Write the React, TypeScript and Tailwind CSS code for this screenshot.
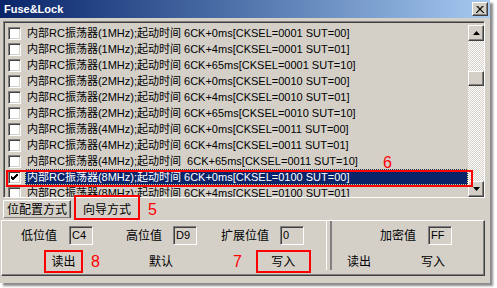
import React from 'react';

const rows: [string, string, string, string][] = [
  ['1MHz', '6CK+0ms', '0001', '00'],
  ['1MHz', '6CK+4ms', '0001', '01'],
  ['1MHz', '6CK+65ms', '0001', '10'],
  ['2MHz', '6CK+0ms', '0010', '00'],
  ['2MHz', '6CK+4ms', '0010', '01'],
  ['2MHz', '6CK+65ms', '0010', '10'],
  ['4MHz', '6CK+0ms', '0011', '00'],
  ['4MHz', '6CK+4ms', '0011', '01'],
  ['4MHz', ' 6CK+65ms', '0011', '10'],
  ['8MHz', '6CK+0ms', '0100', '00'],
  ['8MHz', '6CK+4ms', '0100', '01'],
];

// classic 3d borders
const raised =
  'border border-t-white border-l-white border-b-[#404040] border-r-[#404040] shadow-[inset_-1px_-1px_0_#808080]';
const sunken =
  'border border-t-[#808080] border-l-[#808080] border-b-white border-r-white shadow-[inset_1px_1px_0_#404040,inset_-1px_-1px_0_#d4d0c8]';

function CheckBox({ checked }: { checked?: boolean }) {
  return (
    <div className={`w-[13px] h-[13px] bg-white shrink-0 flex items-center justify-center ${sunken}`}>
      {checked && (
        <svg width="7" height="7" viewBox="0 0 7 7">
          <path d="M0 2 L2 4 L7 -1 M0 3 L2 5 L7 0 M0 4 L2 6 L7 1" stroke="#000" strokeWidth="1" fill="none" />
        </svg>
      )}
    </div>
  );
}

function Arrow({ up }: { up?: boolean }) {
  return (
    <div className={`w-[16px] h-[16px] bg-[#d4d0c8] flex items-center justify-center ${raised}`}>
      <svg width="7" height="4" viewBox="0 0 7 4">
        {up ? <path d="M3.5 0 L7 4 L0 4 Z" fill="#000" /> : <path d="M0 0 L7 0 L3.5 4 Z" fill="#000" />}
      </svg>
    </div>
  );
}

function Field({ value }: { value: string }) {
  return (
    <div className={`w-[24px] h-[19px] bg-[#d4d0c8] text-[11px] leading-[17px] pl-[2px] shrink-0 ${sunken}`}>
      {value}
    </div>
  );
}

function Num({ n, className = '' }: { n: string; className?: string }) {
  return <span className={`text-[16px] leading-none text-[#ff0000] ${className}`}>{n}</span>;
}

export default function App() {
  return (
    <div className="w-[497px] h-[288px] bg-white font-['Liberation_Sans','Noto_Sans_CJK_SC',sans-serif] text-black">
      <div className="relative w-[490px] h-[283px] bg-[#d4d0c8] flex flex-col shadow-[3px_3px_2px_rgba(0,0,0,0.45)]">
        {/* title bar */}
        <div className="h-[18px] bg-gradient-to-r from-[#0a246a] to-[#a6caf0] flex items-center justify-between pl-[4px] pr-[2px]">
          <span className="text-white font-bold text-[11px]">Fuse&amp;Lock</span>
          <div className={`w-[16px] h-[14px] bg-[#d4d0c8] flex items-center justify-center ${raised}`}>
            <svg width="8" height="7" viewBox="0 0 8 7">
              <path d="M0.5 0 L7.5 7 M7.5 0 L0.5 7 M1.5 0 L8 7 M6.5 0 L0 7" stroke="#000" strokeWidth="1" />
            </svg>
          </div>
        </div>

        {/* list */}
        <div className={`mt-[3px] ml-[3px] w-[482px] h-[177px] bg-[#d4d0c8] pt-[3px] pl-[1px] flex ${sunken}`}>
          <div className="flex-1 overflow-hidden">
            {rows.map(([f, t, c, s], i) => {
              const sel = i === 9;
              return (
                <div key={i} className="h-[16px] flex items-center">
                  <div className="ml-[3px]">
                    <CheckBox checked={sel} />
                  </div>
                  <div
                    className={`ml-[4px] flex-1 h-[16px] pl-[2px] flex items-center whitespace-pre text-[11px] ${
                      sel ? 'bg-[#0a246a] text-white outline outline-1 outline-dotted outline-[#d8d890] -outline-offset-1' : ''
                    }`}
                  >
                    {`内部RC振荡器(${f});起动时间 ${t}[CKSEL=${c} SUT=${s}]`}
                  </div>
                </div>
              );
            })}
          </div>
          <div className="w-[16px] flex flex-col">
            <Arrow up />
            <div className="flex-1 bg-[repeating-conic-gradient(#ffffff_0%_25%,#d4d0c8_0%_50%)] bg-[length:2px_2px] pt-[30px]">
              <div className={`w-[16px] h-[15px] bg-[#d4d0c8] ${raised}`} />
            </div>
            <Arrow />
          </div>
        </div>

        {/* tabs */}
        <div className="mt-[2px] ml-[3px] h-[20px] flex items-start text-[12px]">
          <div className={`h-[18px] px-[3px] flex items-center border-b-0 ${raised}`}>位配置方式</div>
          <div className="ml-[3px] -mt-[5px] h-[25px] px-[1px] border-2 border-[#ff0000] flex items-end">
            <div className="h-[17px] px-[6px] flex items-center">向导方式</div>
          </div>
          <Num n="5" className="ml-[8px] mt-[2px]" />
        </div>

        {/* panel */}
        <div className="ml-[1px] w-[484px] h-[56px] flex border-t border-l border-t-white border-l-white border-b border-r border-b-[#404040] border-r-[#404040] shadow-[inset_-1px_-1px_0_#808080] text-[12px]">
          <div className="w-[324px] pl-[2px]">
            <div className="mt-[5px] h-[19px] flex items-center">
              <span className="ml-[17px]">低位值</span>
              <div className="ml-[12px]"><Field value="C4" /></div>
              <span className="ml-[33px]">高位值</span>
              <div className="ml-[11px]"><Field value="D9" /></div>
              <span className="ml-[24px]">扩展位值</span>
              <div className="ml-[11px]"><Field value="0" /></div>
            </div>
            <div className="mt-[5px] h-[23px] flex items-center">
              <div className="ml-[40px] w-[39px] h-[23px] border-2 border-[#ff0000] flex items-center justify-center">读出</div>
              <Num n="8" className="ml-[8px]" />
              <div className="ml-[31px] w-[60px] flex justify-center">默认</div>
              <Num n="7" className="ml-[42px]" />
              <div className="ml-[14px] w-[55px] h-[23px] border-2 border-[#ff0000] flex items-center justify-center">写入</div>
            </div>
          </div>
          <div className="w-[6px] mb-[5px] border-l border-l-white border-r-2 border-r-[#808080] bg-[#d4d0c8]" />
          <div className="flex-1">
            <div className="mt-[5px] h-[19px] flex items-center">
              <span className="ml-[48px]">加密值</span>
              <div className="ml-[12px]"><Field value="FF" /></div>
            </div>
            <div className="mt-[5px] h-[23px] flex items-center">
              <span className="ml-[15px]">读出</span>
              <span className="ml-[50px]">写入</span>
            </div>
          </div>
        </div>

        {/* annotation over the selected row */}
        <div className="absolute left-[6px] top-[170px] w-[467px] h-[17px] border-2 border-[#ff0000] pointer-events-none" />
        <Num n="6" className="absolute left-[383px] top-[155px]" />
      </div>
    </div>
  );
}
